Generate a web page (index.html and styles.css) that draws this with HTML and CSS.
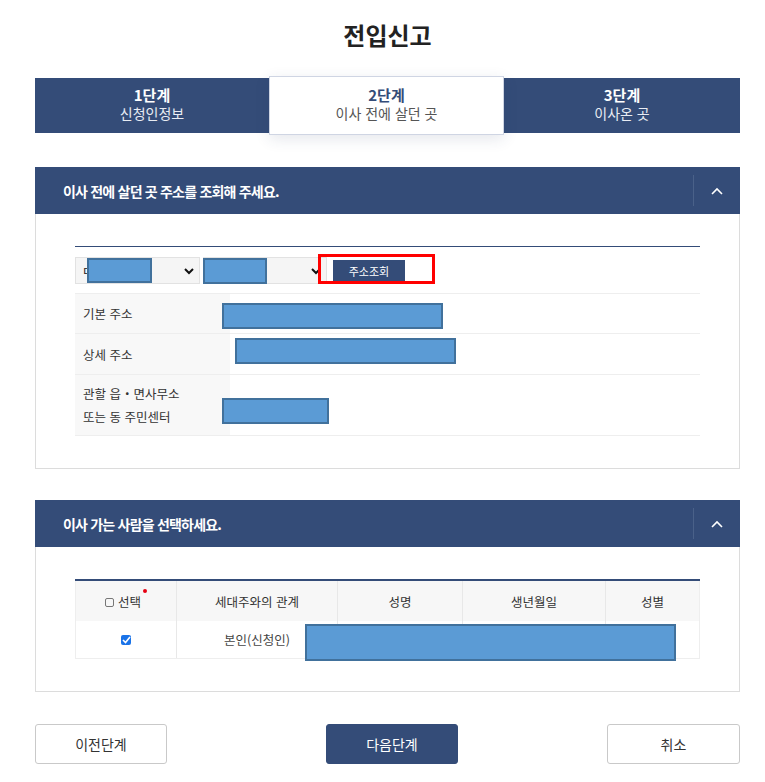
FILE: index.html
```html
<!DOCTYPE html>
<html lang="ko">
<head>
  <meta charset="UTF-8">
  <title>전입신고</title>
  <link rel="stylesheet" href="styles.css">
</head>
<body>
<div class="page">

  <h1 class="title">전입신고</h1>

  <!-- 단계 -->
  <div class="steps">
    <div class="step"><strong>1단계</strong><span>신청인정보</span></div>
    <div class="step active"><strong>2단계</strong><span>이사 전에 살던 곳</span></div>
    <div class="step"><strong>3단계</strong><span>이사온 곳</span></div>
  </div>

  <!-- 이전 주소 -->
  <div class="panel">
    <div class="panel-head">
      <h2>이사 전에 살던 곳 주소를 조회해 주세요.</h2>
      <button class="fold" type="button">
        <svg width="14" height="10" viewBox="0 0 14 10"><path d="M2 8 L7 3 L12 8" fill="none" stroke="#fff" stroke-width="1.6"/></svg>
      </button>
    </div>
    <div class="panel-body">
      <div class="addr">
        <div class="search-row">
          <div class="sel sel-a">ㅁ
            <svg class="arrow" width="10" height="7" viewBox="0 0 10 7"><path d="M1 1 L5 5 L9 1" fill="none" stroke="#111" stroke-width="2"/></svg>
            <i class="mask mask-sel1"></i>
          </div>
          <div class="sel sel-b">
            <svg class="arrow" width="10" height="7" viewBox="0 0 10 7"><path d="M1 1 L5 5 L9 1" fill="none" stroke="#111" stroke-width="2"/></svg>
            <i class="mask mask-sel2"></i>
          </div>
          <button class="btn-search" type="button">주소조회</button>
          <i class="highlight"></i>
        </div>
        <div class="row">
          <div class="label">기본 주소</div>
          <div class="value"><i class="mask mask-basic"></i></div>
        </div>
        <div class="row">
          <div class="label">상세 주소</div>
          <div class="value"><i class="mask mask-detail"></i></div>
        </div>
        <div class="row row-tall">
          <div class="label">관할 읍・면사무소<br>또는 동 주민센터</div>
          <div class="value"><i class="mask mask-office"></i></div>
        </div>
      </div>
    </div>
  </div>

  <!-- 이사 가는 사람 -->
  <div class="panel">
    <div class="panel-head">
      <h2>이사 가는 사람을 선택하세요.</h2>
      <button class="fold" type="button">
        <svg width="14" height="10" viewBox="0 0 14 10"><path d="M2 8 L7 3 L12 8" fill="none" stroke="#fff" stroke-width="1.6"/></svg>
      </button>
    </div>
    <div class="panel-body">
      <div class="people">
        <div class="th"><span class="box"></span>선택<b class="req"></b></div>
        <div class="th">세대주와의 관계</div>
        <div class="th">성명</div>
        <div class="th">생년월일</div>
        <div class="th">성별</div>
        <div class="td"><span class="check">
          <svg width="9" height="8" viewBox="0 0 9 8"><path d="M1 4 L3.5 6.5 L8 1" fill="none" stroke="#fff" stroke-width="1.6"/></svg>
        </span></div>
        <div class="td">본인(신청인)</div>
        <div class="td"></div>
        <div class="td"></div>
        <div class="td"></div>
        <i class="mask mask-person"></i>
      </div>
    </div>
  </div>

  <div class="actions">
    <button class="btn" type="button">이전단계</button>
    <button class="btn primary" type="button">다음단계</button>
    <button class="btn last" type="button">취소</button>
  </div>

</div>
</body>
</html>
```

FILE: styles.css
```css
* { box-sizing: border-box; }
body {
  margin: 0;
  font-family: "Noto Sans CJK KR", "Noto Sans", sans-serif;
  color: #333;
  background: #fff;
}
.page {
  width: 765px;
  padding: 0 25px 0 35px;
}
.title {
  margin: 0;
  padding-top: 17px;
  height: 78px;
  text-align: center;
  font-size: 24px;
  font-weight: bold;
  line-height: 36px;
  color: #222;
}

/* steps */
.steps {
  display: grid;
  grid-template-columns: 234px 235px 236px;
  height: 55px;
  background: #344c78;
}
.step {
  display: flex;
  flex-direction: column;
  align-items: center;
  justify-content: center;
  padding-bottom: 3px;
  color: #fff;
  line-height: 18px;
}
.step strong { font-size: 15px; }
.step span { font-size: 14px; color: #e8ecf3; }
.step.active {
  margin: -2px 0;
  background: #fff;
  border: 1px solid #cfd5e3;
  box-shadow: 0 4px 14px rgba(40, 60, 100, 0.12);
  color: #333;
  position: relative;
}
.step.active strong { color: #344c78; }
.step.active span { color: #555; }

/* panels */
.panel {
  margin-top: 34px;
  border: 1px solid #dcdcdc;
  border-top: none;
}
.panel + .panel { margin-top: 31px; }
.panel-head {
  display: flex;
  align-items: center;
  height: 47px;
  margin: 0 -1px;
  background: #344c78;
}
.panel-head h2 {
  flex: 1;
  margin: 0;
  padding-left: 28px;
  font-size: 14px;
  font-weight: bold;
  color: #fff;
  letter-spacing: -0.8px;
}
.fold {
  width: 47px;
  height: 31px;
  border: none;
  border-left: 1px solid #4a6189;
  background: none;
  padding: 0;
  display: flex;
  align-items: center;
  justify-content: center;
}
.panel-body {
  padding: 32px 39px 32px 39px;
}

.mask {
  position: absolute;
  display: block;
  background: #5b9bd5;
  border: 2px solid #41719c;
}

/* address table */
.addr {
  border-top: 1px solid #344c78;
}
.search-row {
  position: relative;
  display: flex;
  align-items: center;
  gap: 3px;
  height: 47px;
  padding-top: 1px;
  border-bottom: 1px solid #eee;
}
.sel {
  position: relative;
  height: 27px;
  background: #f5f5f5;
  border: 1px solid #e2e2e2;
  font-size: 12px;
  line-height: 25px;
  padding-left: 6px;
  color: #222;
}
.sel-a { width: 125px; }
.sel-b { width: 124px; }
.arrow { position: absolute; right: 5px; top: 10px; }
.mask-sel1 { left: 11px; top: 0; width: 65px; height: 25px; }
.mask-sel2 { left: -1px; top: 0; width: 64px; height: 26px; }
.btn-search {
  margin-left: 3px;
  width: 72px;
  height: 22px;
  border: none;
  background: #344c78;
  color: #fff;
  font-family: inherit;
  font-size: 11px;
}
.highlight {
  position: absolute;
  left: 243px;
  top: 7px;
  width: 117px;
  height: 30px;
  border: 3px solid #ff0000;
}
.row {
  display: grid;
  grid-template-columns: 155px 1fr;
  height: 40px;
  border-bottom: 1px solid #eee;
}
.row + .row { height: 41px; }
.row.row-tall { height: 61px; }
.label {
  display: flex;
  align-items: center;
  padding-left: 8px;
  background: #f8f8f8;
  font-size: 12.5px;
  line-height: 23px;
  color: #333;
}
.value { position: relative; }
.mask-basic { left: -8px; top: 9px; width: 221px; height: 26px; }
.mask-detail { left: 5px; top: 4px; width: 221px; height: 26px; }
.mask-office { left: -8px; top: 23px; width: 107px; height: 26px; }

/* people table */
.people {
  position: relative;
  display: grid;
  grid-template-columns: 101px 161px 125px 143px 95px;
  grid-template-rows: 40px 37px;
  border-top: 2px solid #344c78;
  border-bottom: 1px solid #eee;
}
.th, .td {
  display: flex;
  align-items: center;
  justify-content: center;
  font-size: 12.5px;
  border-left: 1px solid #e8e8e8;
}
.th:first-child, .td:nth-child(6) { border-left: 1px solid #eee; }
.th:nth-child(5), .td:nth-child(10) { border-right: 1px solid #eee; }
.th {
  background: #f7f7f7;
  color: #333;
}
.td { background: #fff; color: #444; }
.box {
  width: 9px;
  height: 9px;
  border: 1px solid #777;
  border-radius: 2px;
  margin-right: 4px;
  margin-top: 2px;
}
.req {
  width: 4px;
  height: 4px;
  border-radius: 50%;
  background: #e60012;
  align-self: flex-start;
  margin: 8px 0 0 2px;
}
.check {
  width: 10px;
  height: 10px;
  border-radius: 2px;
  background: #1a73e8;
  display: flex;
  align-items: center;
  justify-content: center;
}
.mask-person { left: 230px; top: 43px; width: 371px; height: 37px; }

/* bottom buttons */
.actions {
  display: flex;
  margin-top: 32px;
}
.btn {
  width: 132px;
  height: 40px;
  border: 1px solid #c9c9c9;
  border-radius: 3px;
  background: #fff;
  color: #333;
  font-family: inherit;
  font-size: 14px;
}
.btn.last { width: 133px; }
.btn.primary {
  margin: 0 149px 0 159px;
  background: #344c78;
  border-color: #344c78;
  color: #fff;
}
```
